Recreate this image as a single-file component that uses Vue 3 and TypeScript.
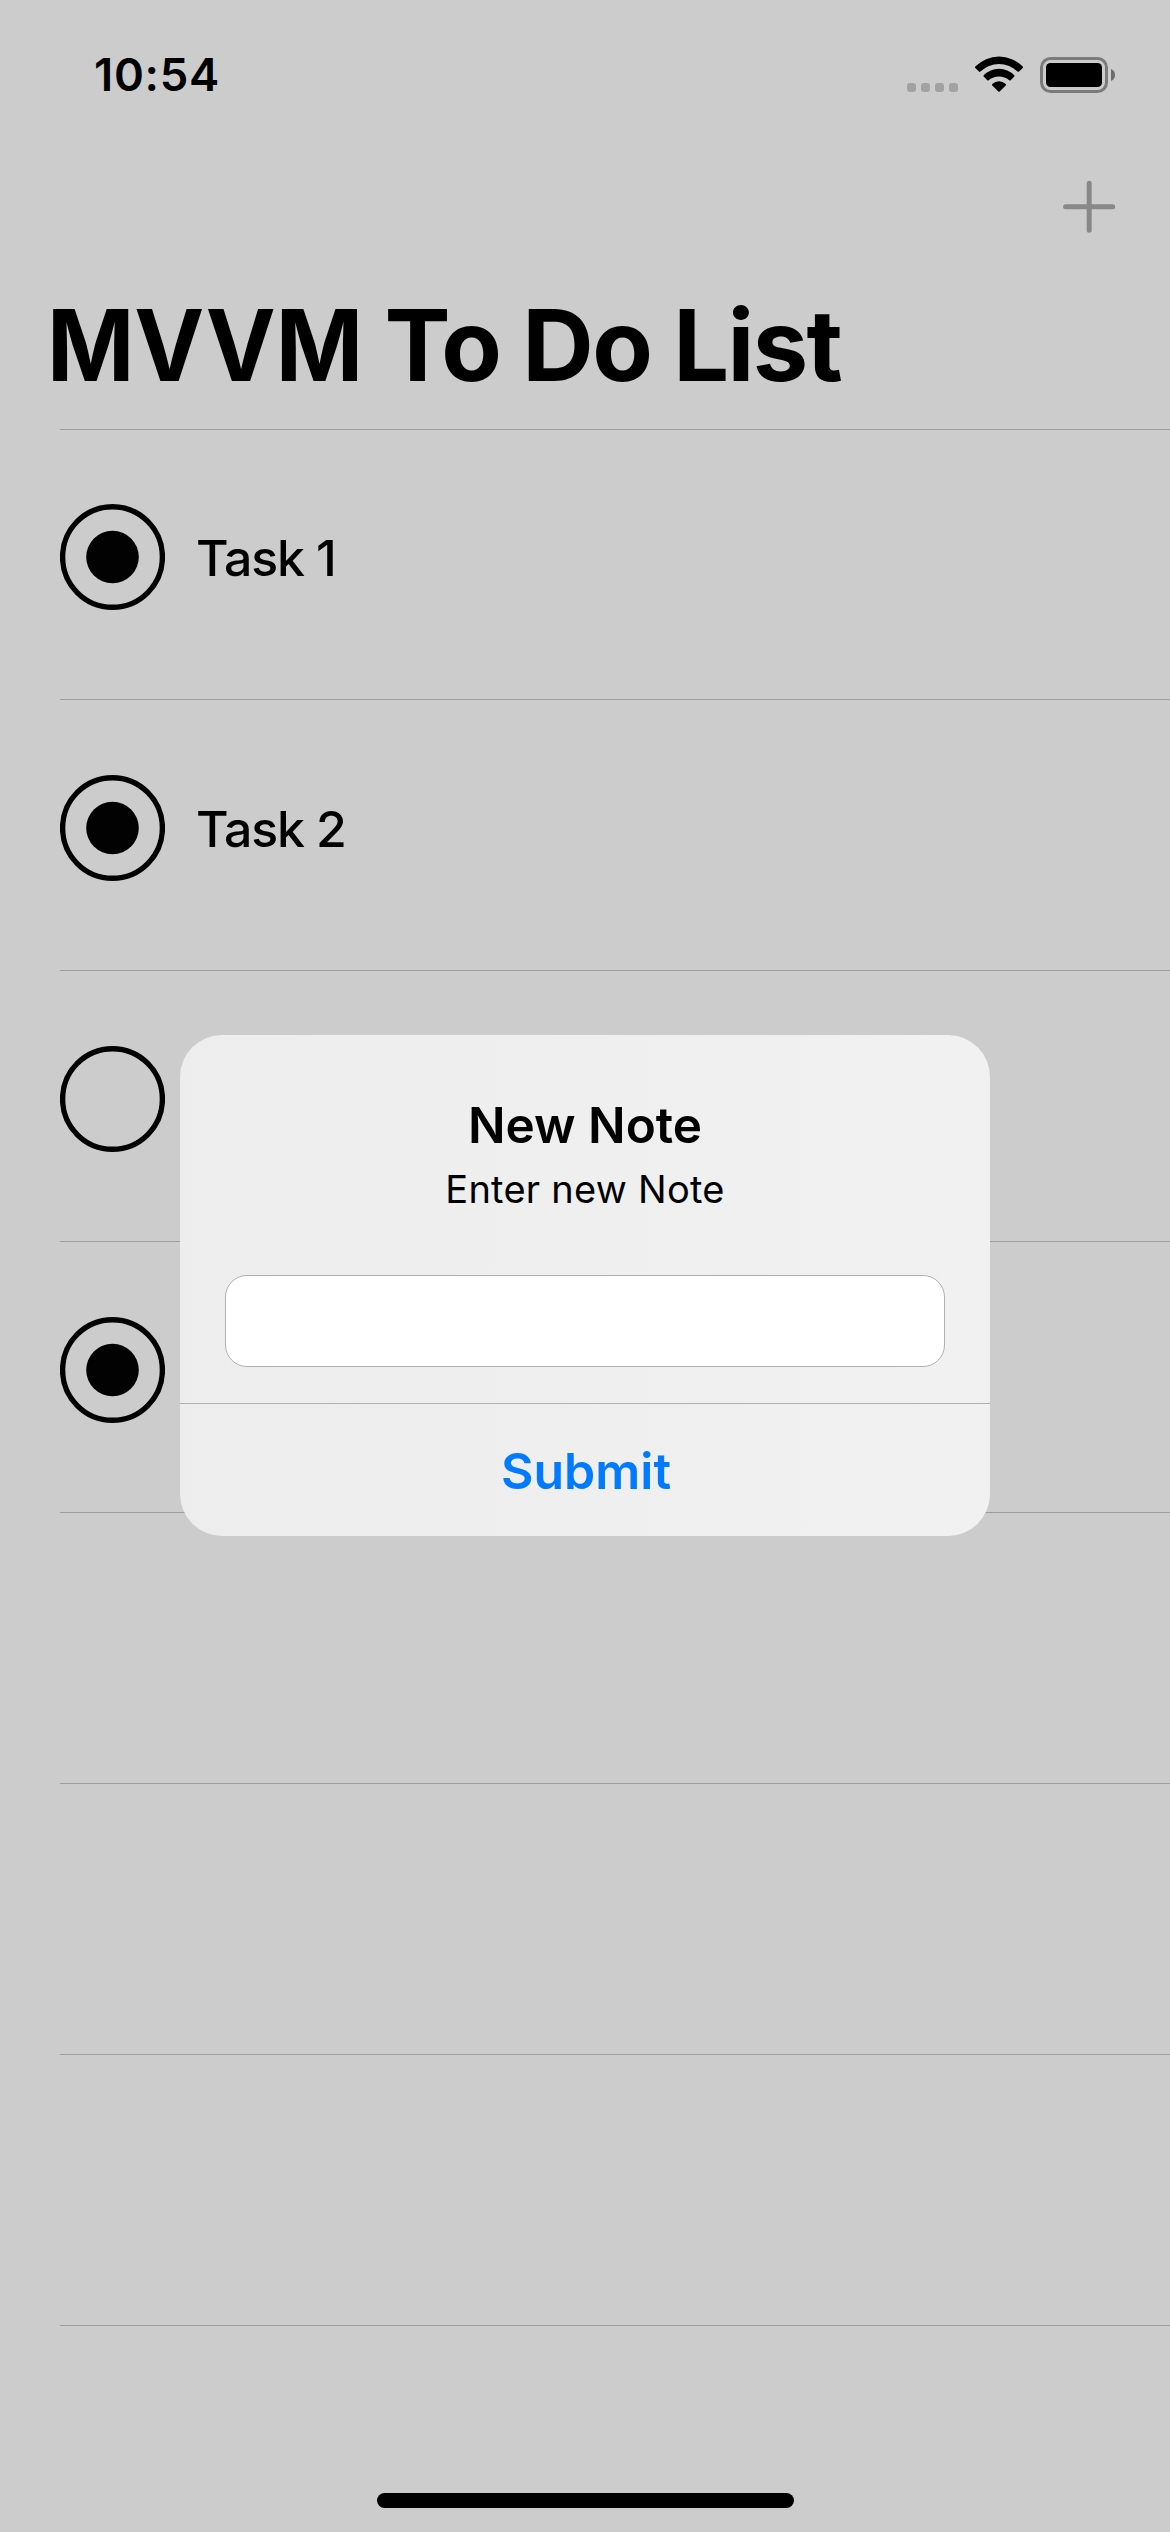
<script setup lang="ts">
interface Row {
  title: string
  state: 'done' | 'open' | 'empty'
}

const rows: Row[] = [
  { title: 'Task 1', state: 'done' },
  { title: 'Task 2', state: 'done' },
  { title: '', state: 'open' },
  { title: '', state: 'done' },
  { title: '', state: 'empty' },
  { title: '', state: 'empty' },
  { title: '', state: 'empty' },
]
</script>

<template>
  <div class="screen">
    <header class="status">
      <span class="time">10:54</span>
      <div class="indicators">
        <div class="cell"><i v-for="n in 4" :key="n"></i></div>
        <svg class="wifi" width="48" height="36" viewBox="0 0 48 36">
          <path d="M.3 10.6A33 33 0 0 1 47.7 10.6Q48.3 11.3 47.7 12L44 15.6Q43.3 16.2 42.6 15.6A26.5 26.5 0 0 0 5.4 15.6Q4.7 16.2 4 15.6L.3 12Q-.3 11.3 .3 10.6Z" />
          <path d="M8.7 19.2A21.5 21.5 0 0 1 39.3 19.2Q39.9 19.9 39.3 20.6L35.7 24.2Q35 24.8 34.3 24.2A16.2 16.2 0 0 0 13.7 24.2Q13 24.8 12.3 24.2L8.7 20.6Q8.1 19.9 8.7 19.2Z" />
          <path d="M17.3 28A9.5 9.5 0 0 1 30.7 28Q31.3 28.7 30.7 29.4L24.7 35.5Q24 36.2 23.3 35.5L17.3 29.4Q16.7 28.7 17.3 28Z" />
        </svg>
        <svg width="75" height="36" viewBox="0 0 75 36">
          <rect x="1.5" y="1.5" width="65" height="33" rx="9" fill="none" stroke="#7b7b7b" stroke-width="3" />
          <rect x="6" y="6" width="56" height="24" rx="4.5" />
          <path d="M71 12A6.5 6.5 0 0 1 71 24Z" fill="#6c6c6c" />
        </svg>
      </div>
    </header>

    <nav class="nav">
      <svg width="54" height="54" viewBox="0 0 54 54">
        <path d="M27.2 3.3V50.3M3.6 26.7H50.7" stroke="#888" stroke-width="5" stroke-linecap="round" />
      </svg>
    </nav>

    <h1 class="title"><span class="caps">MVVM</span> To Do List</h1>

    <ul class="list">
      <li v-for="(row, i) in rows" :key="i" class="row">
        <svg v-if="row.state !== 'empty'" width="105" height="106" viewBox="0 0 105 106">
          <ellipse cx="52.5" cy="53" rx="49.9" ry="50.3" fill="none" stroke="#020202" stroke-width="5.4" />
          <circle v-if="row.state === 'done'" cx="52.5" cy="53" r="26.3" fill="#020202" />
        </svg>
        <span class="label">{{ row.title }}</span>
      </li>
    </ul>

    <div class="home"></div>

    <div class="overlay">
      <section class="alert">
        <h2>New Note</h2>
        <p>Enter new Note</p>
        <input type="text" />
        <button type="button">Submit</button>
      </section>
    </div>
  </div>
</template>

<style>
body {
  margin: 0;
  background: #ccc;
}
</style>

<style scoped>
.screen {
  position: relative;
  display: flex;
  flex-direction: column;
  width: 1170px;
  height: 2532px;
  overflow: hidden;
  background: #ccc;
  color: #000;
  font-family: Inter, 'Liberation Sans', sans-serif;
}
.status {
  display: flex;
  justify-content: space-between;
  align-items: center;
  height: 148px;
  padding: 0 55px 0 94px;
}
.time {
  font-size: 45.4px;
  font-weight: 600;
  letter-spacing: 0.7px;
}
.indicators {
  display: flex;
  align-items: flex-end;
}
.cell {
  display: flex;
  gap: 5px;
  margin: 0 17px 1px 0;
}
.cell i {
  width: 9px;
  height: 9px;
  border-radius: 3px;
  background: #a2a2a2;
}
.wifi {
  margin: 0 17px 1px 0;
}
.nav {
  display: flex;
  justify-content: flex-end;
  height: 106px;
  padding: 32px 54px 0 0;
}
.title {
  margin: 0;
  padding: 0 0 0 47px;
  height: 143px;
  line-height: 118px;
  font-size: 99px;
  font-weight: 700;
  letter-spacing: -1.6px;
  white-space: nowrap;
}
.caps {
  display: inline-block;
  margin-right: -18px;
  letter-spacing: 0;
  transform: scaleX(0.947);
  transform-origin: left;
}
.list {
  margin: 0;
  padding: 0 0 0 60px;
  list-style: none;
}
.row {
  box-sizing: border-box;
  display: flex;
  height: 271px;
  padding-top: 75px;
  border-bottom: 1px solid #9d9d9d;
}
.row:first-child {
  padding-top: 74px;
  border-top: 1px solid #9d9d9d;
}
.label {
  margin-left: 31px;
  line-height: 108px;
  font-size: 50px;
  font-weight: 500;
  letter-spacing: -1.1px;
}
.home {
  width: 417px;
  height: 15px;
  margin: auto auto 24px 377px;
  border-radius: 8px;
  background: #000;
}
.overlay {
  position: absolute;
  inset: 0;
  display: flex;
  justify-content: center;
  align-items: flex-start;
  padding-top: 1035px;
}
.alert {
  display: flex;
  flex-direction: column;
  width: 810px;
  height: 501px;
  border-radius: 42px;
  overflow: hidden;
  background: linear-gradient(90deg, #ededed, #efefef 50%, #f1f1f1);
  text-align: center;
}
.alert h2 {
  margin: 60px 0 0;
  line-height: 60px;
  font-size: 49.5px;
  font-weight: 600;
}
.alert p {
  margin: 10px 0 0;
  line-height: 48px;
  font-size: 38px;
  letter-spacing: 0.25px;
}
.alert input {
  box-sizing: border-box;
  width: 720px;
  height: 92px;
  margin: 62px 45px 36px;
  border: 1px solid #b0b0b0;
  border-radius: 22px;
  background: #fff;
}
.alert button {
  flex: 1;
  padding: 2px 0 0 2px;
  border: 0;
  border-top: 1px solid #b0b0b0;
  background: none;
  color: #007aff;
  font: 600 50px Inter, 'Liberation Sans', sans-serif;
}
</style>
